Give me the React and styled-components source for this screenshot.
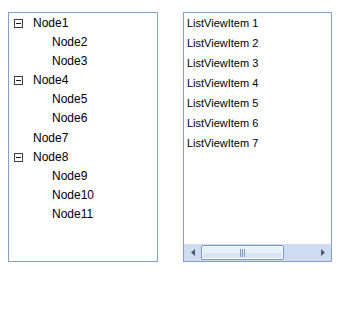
import React from 'react'
import styled, { createGlobalStyle } from 'styled-components'

const GlobalStyle = createGlobalStyle`
  body {
    margin: 0;
    background: #ffffff;
    font-family: "Liberation Sans", Arial, sans-serif;
  }
`

const treeData = [
  { label: 'Node1', level: 0, expander: true },
  { label: 'Node2', level: 1 },
  { label: 'Node3', level: 1 },
  { label: 'Node4', level: 0, expander: true },
  { label: 'Node5', level: 1 },
  { label: 'Node6', level: 1 },
  { label: 'Node7', level: 0 },
  { label: 'Node8', level: 0, expander: true },
  { label: 'Node9', level: 1 },
  { label: 'Node10', level: 1 },
  { label: 'Node11', level: 1 },
]

const listItems = [1, 2, 3, 4, 5, 6, 7].map(n => `ListViewItem ${n}`)

function Tree() {
  return (
    <TreeBox>
      {treeData.map(node => (
        <TreeRow key={node.label} level={node.level}>
          <ExpanderSlot>{node.expander && <Expander />}</ExpanderSlot>
          <NodeLabel>{node.label}</NodeLabel>
        </TreeRow>
      ))}
    </TreeBox>
  )
}

function ListView() {
  return (
    <ListBox>
      <Items>
        {listItems.map(item => (
          <Item key={item}>{item}</Item>
        ))}
      </Items>
      <HScroll>
        <ArrowButton>
          <svg width="4" height="7" viewBox="0 0 4 7">
            <path d="M4 0 L0 3.5 L4 7 Z" fill="#4b5872" />
          </svg>
        </ArrowButton>
        <Track>
          <Thumb>
            <Grip>
              <span />
              <span />
              <span />
            </Grip>
          </Thumb>
        </Track>
        <ArrowButton>
          <svg width="4" height="7" viewBox="0 0 4 7">
            <path d="M0 0 L4 3.5 L0 7 Z" fill="#4b5872" />
          </svg>
        </ArrowButton>
      </HScroll>
    </ListBox>
  )
}

export default function App() {
  return (
    <>
      <GlobalStyle />
      <Page>
        <Tree />
        <ListView />
      </Page>
    </>
  )
}

const Page = styled.div`
  display: flex;
  align-items: flex-start;
  gap: 25px;
  padding: 12px 0 0 8px;
`

const TreeBox = styled.div`
  box-sizing: border-box;
  width: 150px;
  height: 250px;
  border: 1px solid #829fd0;
  padding-top: 0.5px;
  display: flex;
  flex-direction: column;
`

const TreeRow = styled.div`
  display: flex;
  align-items: center;
  height: 19.2px;
  padding-left: ${props => 5 + props.level * 19}px;
`

const ExpanderSlot = styled.span`
  width: 19px;
  height: 9px;
  flex: none;
  display: flex;
  align-items: center;
`

const Expander = styled.span`
  position: relative;
  box-sizing: border-box;
  width: 9px;
  height: 9px;
  border: 1px solid #3d3d3d;
  &::after {
    content: '';
    position: absolute;
    left: 1px;
    top: 3px;
    width: 5px;
    height: 1px;
    background: #1e1e1e;
  }
`

const NodeLabel = styled.span`
  font-size: 12px;
  line-height: 19.2px;
  color: #000;
  white-space: nowrap;
`

const ListBox = styled.div`
  box-sizing: border-box;
  width: 149px;
  height: 250px;
  border: 1px solid #829fd0;
  display: flex;
  flex-direction: column;
`

const Items = styled.div`
  flex: 1;
  padding: 0 0 0 3px;
`

const Item = styled.div`
  font-size: 11px;
  line-height: 20px;
  color: #000;
  white-space: nowrap;
`

const HScroll = styled.div`
  height: 17px;
  display: flex;
  background: #cddcf1;
`

const ArrowButton = styled.div`
  width: 17px;
  flex: none;
  display: flex;
  align-items: center;
  justify-content: center;
`

const Track = styled.div`
  flex: 1;
  display: flex;
  align-items: stretch;
  padding: 1px 0;
`

const Thumb = styled.div`
  box-sizing: border-box;
  width: 83px;
  border: 1px solid #7b97c4;
  border-radius: 2px;
  box-shadow: inset 0 0 0 1px #f7faff;
  background: linear-gradient(#eef3fb 0%, #e6eef9 50%, #d8e4f4 51%, #dbe6f5 100%);
  display: flex;
  align-items: center;
  justify-content: center;
`

const Grip = styled.div`
  display: flex;
  gap: 1px;
  height: 8px;
  & > span {
    width: 1px;
    background: #8097bd;
  }
`
